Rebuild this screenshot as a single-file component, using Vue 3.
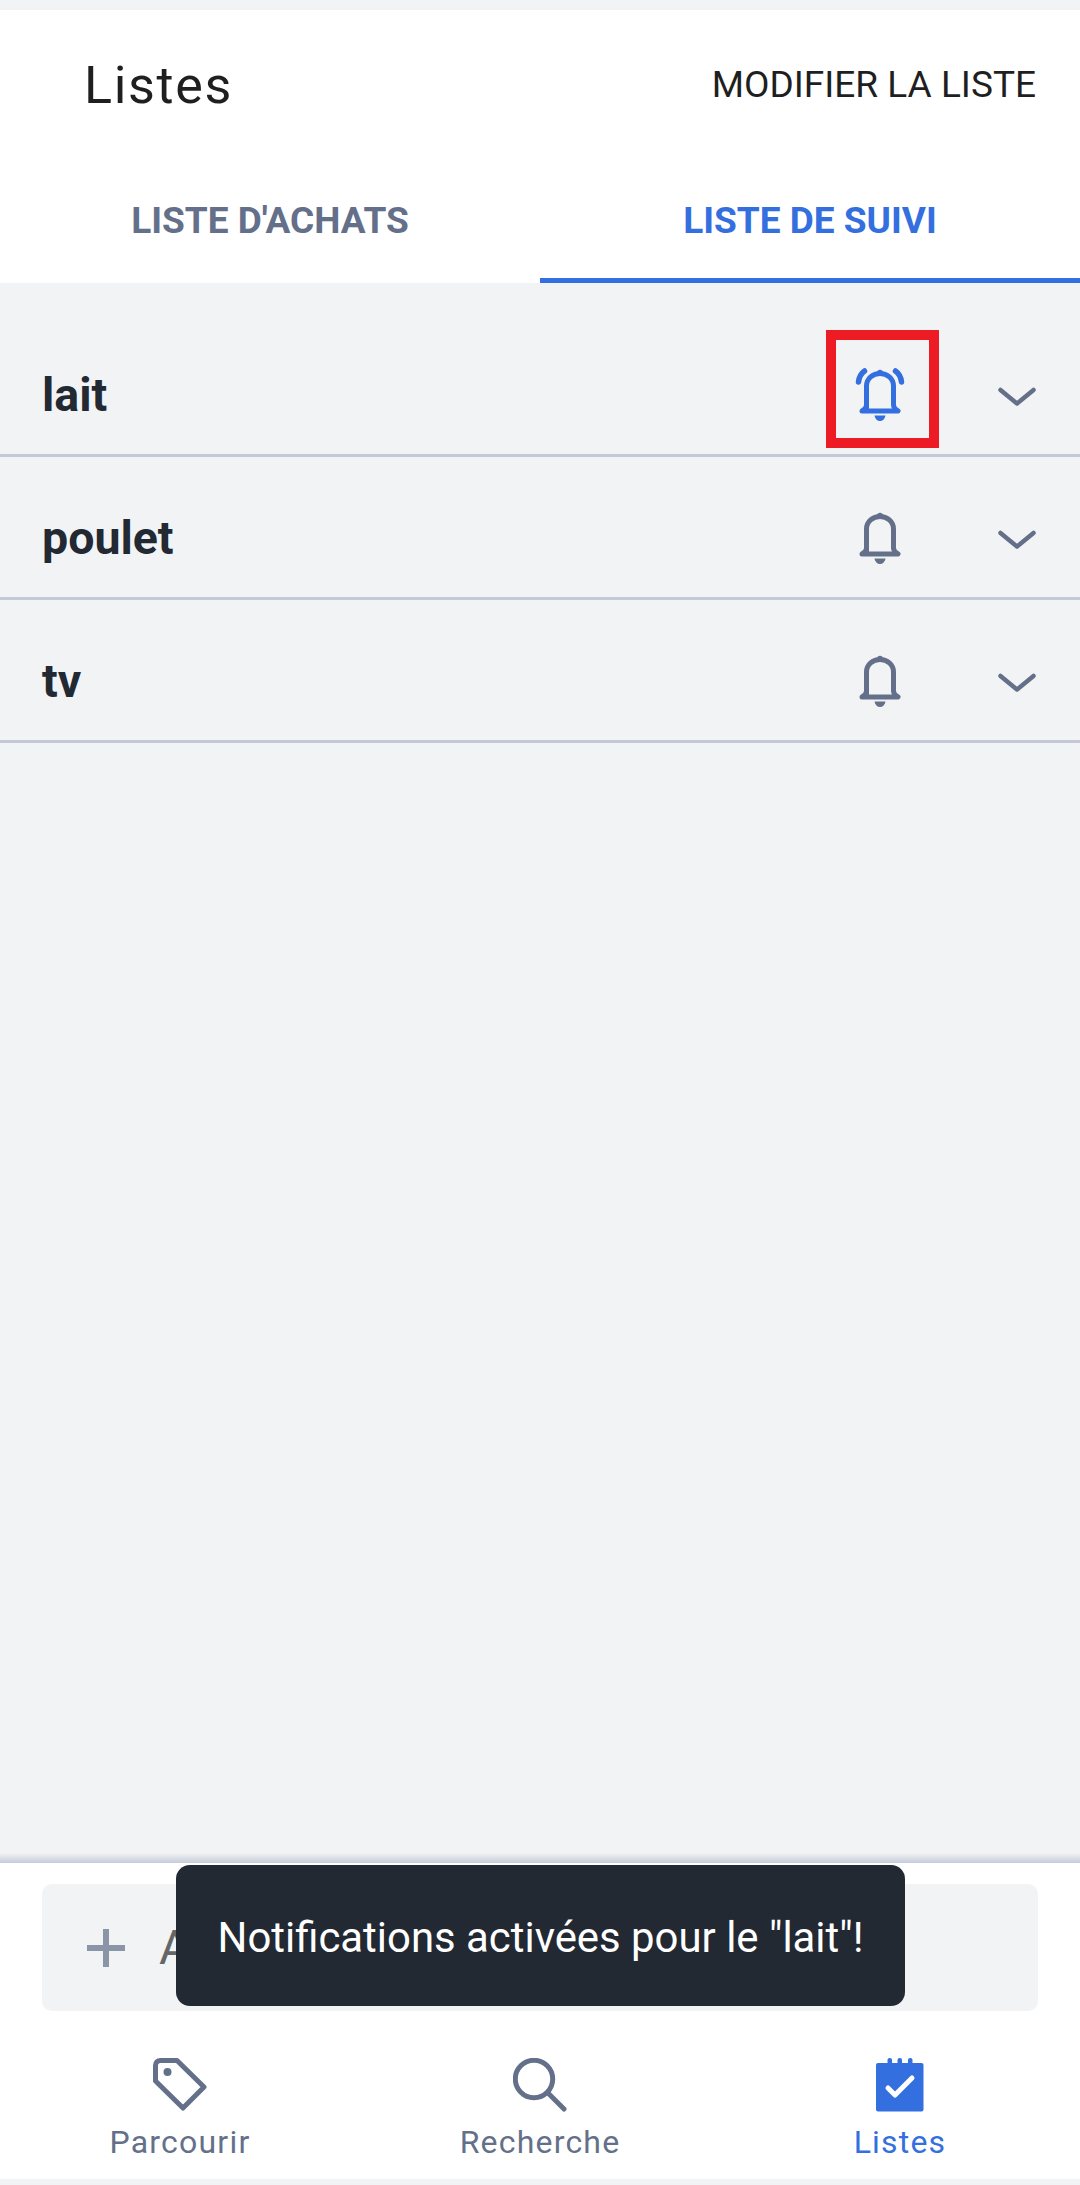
<script setup>
const rows = [
  { name: 'lait', active: true },
  { name: 'poulet', active: false },
  { name: 'tv', active: false },
]
</script>

<template>
  <div class="page">
    <header class="header">
      <div class="topbar">
        <h1 class="title">Listes</h1>
        <span class="edit">MODIFIER LA LISTE</span>
      </div>
      <div class="tabs">
        <div class="tab">LISTE D'ACHATS</div>
        <div class="tab tab-active">LISTE DE SUIVI</div>
      </div>
    </header>

    <main class="list">
      <div v-for="row in rows" :key="row.name" class="row">
        <span class="row-name">{{ row.name }}</span>
        <svg class="bell" :class="{ 'bell-active': row.active }" viewBox="-4 -4 52 58" width="52" height="58" aria-hidden="true">
          <path class="bell-line" d="M8.5 39V16C8.5 8.5 15 3.5 22 3.5S35.5 8.5 35.5 16V35C35.5 37.5 37.5 39.5 40 41H4C6.5 39.5 8.5 37.5 8.5 35" />
          <circle class="bell-fill" cx="22" cy="2.5" r="2.8" />
          <path class="bell-fill" d="M16.5 45.5H27.5C27 49 24.8 51 22 51S17 49 16.5 45.5Z" />
          <template v-if="row.active">
            <path class="bell-line ear" d="M6.5 1C3 3.5 1 7 0.5 12" />
            <path class="bell-line ear" d="M37.5 1C41 3.5 43 7 43.5 12" />
          </template>
        </svg>
        <svg class="chevron" viewBox="0 0 40 22" width="40" height="22" aria-hidden="true">
          <path d="M3.5 5L20 18.5L36.5 5" />
        </svg>
        <span v-if="row.active" class="highlight"></span>
      </div>
    </main>

    <footer class="footer">
      <div class="add">
        <svg class="plus" viewBox="0 0 38 38" width="38" height="38" aria-hidden="true">
          <path d="M19 0V38M0 19H38" />
        </svg>
        <span class="add-text">Ajouter</span>
      </div>
    </footer>

    <nav class="nav">
      <div class="nav-item">
        <svg class="nav-icon" viewBox="0 0 54 54" width="54" height="54" aria-hidden="true">
          <path class="nav-line" d="M2.5 23V7.5C2.5 4.5 4.5 2.5 7.5 2.5H24L51 29L30 50Z" />
          <circle class="nav-dot" cx="14.5" cy="14" r="4" />
        </svg>
        <span>Parcourir</span>
      </div>
      <div class="nav-item">
        <svg class="nav-icon" viewBox="0 0 54 54" width="54" height="54" aria-hidden="true">
          <circle class="nav-line" cx="21" cy="21" r="18.7" />
          <path class="nav-line" d="M35 35L51 51" />
        </svg>
        <span>Recherche</span>
      </div>
      <div class="nav-item nav-active">
        <svg class="nav-icon" viewBox="0 0 48 54" width="48" height="54" aria-hidden="true">
          <rect class="list-sheet" x="0" y="5" width="47.5" height="48.5" rx="2" />
          <rect class="list-sheet" x="11.5" y="0" width="4.5" height="8" rx="2" />
          <rect class="list-sheet" x="21.5" y="0" width="4.5" height="8" rx="2" />
          <rect class="list-sheet" x="32" y="0" width="4.5" height="8" rx="2" />
          <path class="list-check" d="M12 30L19 37L36 20" />
        </svg>
        <span>Listes</span>
      </div>
    </nav>

    <div class="toast">Notifications activées pour le "lait"!</div>
  </div>
</template>

<style>
html, body { margin: 0; background: #f1f3f5; }
</style>

<style scoped>
.page {
  position: relative;
  width: 1080px;
  height: 2185px;
  box-sizing: border-box;
  padding: 10px 0 6px;
  display: flex;
  flex-direction: column;
  background: #f1f3f5;
  font-family: Roboto, "Liberation Sans", sans-serif;
  overflow: hidden;
}
.header { background: #fff; }
.topbar {
  height: 148px;
  display: flex;
  align-items: center;
  justify-content: space-between;
  padding: 0 44px 0 84px;
}
.title {
  margin: 0;
  padding-top: 2px;
  font-size: 52px;
  font-weight: 400;
  letter-spacing: 1.7px;
  color: #1f1f1f;
}
.edit {
  font-size: 37px;
  font-weight: 400;
  color: #1f1f1f;
}
.tabs { display: flex; height: 125px; }
.tab {
  flex: 1;
  display: flex;
  align-items: center;
  justify-content: center;
  box-sizing: border-box;
  padding-top: 5px;
  border-bottom: 5px solid transparent;
  font-size: 37px;
  font-weight: 700;
  color: #64708a;
}
.tab-active { color: #346fe0; border-bottom-color: #346fe0; }
.list {
  flex: 1;
  padding-top: 31px;
  box-sizing: border-box;
  background: linear-gradient(to top, #c5cbd8 0, #f1f3f5 10px);
}
.row {
  position: relative;
  height: 143px;
  box-sizing: border-box;
  padding: 22px 43px 0 42px;
  display: flex;
  align-items: center;
  border-bottom: 3px solid #c3c9d7;
}
.row-name {
  flex: 1;
  font-size: 46.5px;
  font-weight: 700;
  color: #222933;
}
.bell { margin-right: 91px; overflow: visible; }
.bell-line {
  fill: none;
  stroke: #64708a;
  stroke-width: 5;
  stroke-linecap: round;
  stroke-linejoin: round;
}
.bell-fill { fill: #64708a; }
.bell-active .bell-line { stroke: #346fe0; }
.bell-active .bell-fill { fill: #346fe0; }
.bell-active .ear { stroke-width: 5.5; }
.chevron { margin-top: 2px; }
.chevron path {
  fill: none;
  stroke: #64708a;
  stroke-width: 4.5;
  stroke-linecap: round;
  stroke-linejoin: round;
}
.highlight {
  position: absolute;
  top: 16px;
  right: 141px;
  width: 113px;
  height: 118px;
  box-sizing: border-box;
  border: 10px solid #ed1c24;
}
.footer {
  height: 169px;
  box-sizing: border-box;
  padding: 21px 42px 0;
  background: #fff;
}
.add {
  height: 127px;
  box-sizing: border-box;
  padding-left: 45px;
  display: flex;
  align-items: center;
  border-radius: 10px;
  background: #f1f3f5;
}
.plus path { stroke: #8b95a8; stroke-width: 6; fill: none; }
.add-text {
  margin-left: 34px;
  font-size: 48px;
  color: #666;
}
.nav {
  height: 147px;
  display: flex;
  background: #fff;
}
.nav-item {
  flex: 1;
  display: flex;
  flex-direction: column;
  align-items: center;
  padding-top: 26px;
  font-size: 32px;
  letter-spacing: 1.2px;
  color: #64708a;
}
.nav-item span { margin-top: 11px; line-height: 38px; }
.nav-active { color: #346fe0; }
.nav-line {
  fill: none;
  stroke: #64708a;
  stroke-width: 5;
  stroke-linecap: round;
  stroke-linejoin: round;
}
.nav-dot { fill: #64708a; }
.list-sheet { fill: #346fe0; }
.list-check {
  fill: none;
  stroke: #fff;
  stroke-width: 5;
  stroke-linecap: round;
  stroke-linejoin: round;
}
.toast {
  position: absolute;
  left: 176px;
  top: 1865px;
  width: 729px;
  height: 141px;
  box-sizing: border-box;
  padding-top: 3px;
  display: flex;
  align-items: center;
  justify-content: center;
  border-radius: 14px;
  background: #222933;
  color: #fff;
  font-size: 41.9px;
}
</style>
